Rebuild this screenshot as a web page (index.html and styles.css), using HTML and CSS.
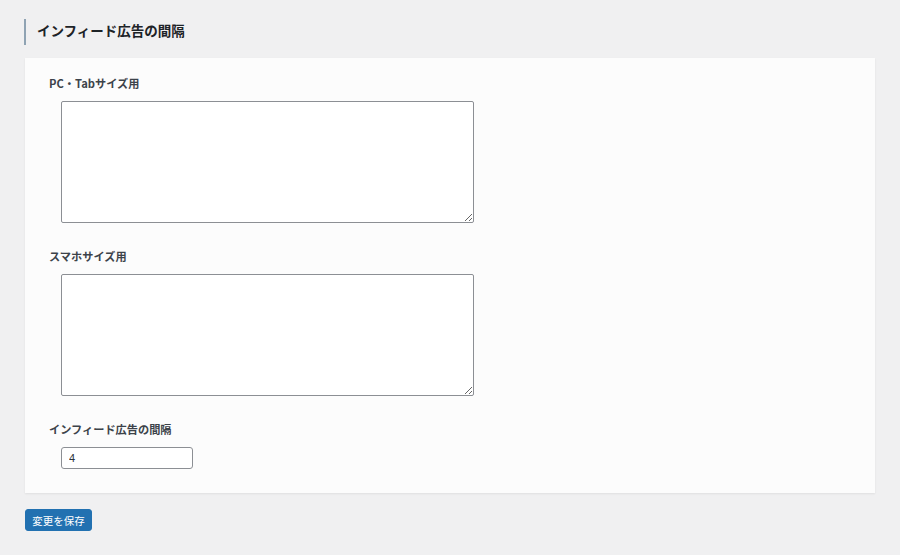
FILE: index.html
```html
<!DOCTYPE html>
<html lang="ja">
<head>
<meta charset="utf-8">
<link rel="stylesheet" href="styles.css">
</head>
<body>
<div class="page">
  <h2 class="section-title">インフィード広告の間隔</h2>
  <div class="card">
    <div class="field">
      <label class="label">PC・Tabサイズ用</label>
      <textarea class="area"></textarea>
    </div>
    <div class="field">
      <label class="label">スマホサイズ用</label>
      <textarea class="area"></textarea>
    </div>
    <div class="field">
      <label class="label">インフィード広告の間隔</label>
      <input class="num" type="text" value="4">
    </div>
  </div>
  <button class="save">変更を保存</button>
</div>
</body>
</html>
```

FILE: styles.css
```css
* { box-sizing: border-box; }
html, body {
  margin: 0;
  padding: 0;
  background: #f0f0f1;
  font-family: "Noto Sans CJK JP", "Liberation Sans", sans-serif;
  color: #1d2327;
}
.page {
  padding: 19px 25px 0 25px;
}
.section-title {
  margin: 0 0 0 -1px;
  height: 26px;
  line-height: 23px;
  border-left: 2px solid #8fa3b3;
  padding-left: 11px;
  font-size: 13.5px;
  font-weight: 700;
  color: #1d2327;
}
.card {
  margin-top: 13px;
  width: 850px;
  background: #fcfcfc;
  box-shadow: 0 1px 2px rgba(0,0,0,0.07);
  padding: 18px 24px 24px 24px;
}
.field + .field { margin-top: 26px; }
.label {
  display: block;
  height: 16px;
  line-height: 15px;
  font-size: 11.2px;
  font-weight: 700;
  color: #3c434a;
  margin-bottom: 9px;
}
.area {
  display: block;
  margin-left: 12px;
  width: 413px;
  height: 122px;
  border: 1px solid #8c8f94;
  border-radius: 2px;
  background: #fff;
  resize: vertical;
}
.num {
  display: block;
  margin-left: 12px;
  width: 132px;
  height: 22px;
  border: 1px solid #8c8f94;
  border-radius: 3px;
  background: #fff;
  padding: 0 7px;
  font-family: "Liberation Sans", sans-serif;
  font-size: 11px;
  color: #2c3338;
}
.save {
  display: block;
  margin-top: 16px;
  width: 67px;
  height: 22px;
  border: 1px solid #2271b1;
  border-radius: 3px;
  background: #2271b1;
  color: #fff;
  font-family: "Noto Sans CJK JP", sans-serif;
  font-size: 10.5px;
  padding: 0;
}
```
